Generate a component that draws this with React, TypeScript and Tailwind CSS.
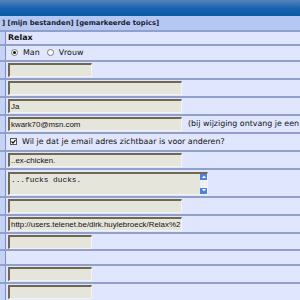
import React from 'react';

const font = { fontFamily: '"Liberation Sans", Arial, sans-serif' };
const verdana = { fontFamily: '"DejaVu Sans", Verdana, sans-serif' };

const Input: React.FC<{ w: number; value?: string }> = ({ w, value }) => (
  <div
    className="h-[14px] bg-[#e6e5dc] border-t-2 border-l-2 border-t-[#6e6850] border-l-[#6e6850] border-b border-r border-b-[#f4f3ec] border-r-[#f4f3ec] text-[7.9px] leading-[11px] pl-[1px] text-[#111] overflow-hidden whitespace-nowrap"
    style={{ width: w }}
  >
    {value}
  </div>
);

const Row: React.FC<{ h: number; children?: React.ReactNode }> = ({ h, children }) => (
  <div className="flex border-b-2 border-[#939fcb]" style={{ height: h + 2 }}>
    <div className="w-[6px] shrink-0 bg-[#c6d3f5] border-r border-[#7d8bc8]" />
    <div className="flex-1 flex items-center pl-[2px] bg-[#dfe6fd] overflow-hidden">{children}</div>
  </div>
);

export default function App() {
  return (
    <div className="w-[300px] h-[300px] overflow-hidden bg-[#dfe6fd]" style={font}>
      {/* header band */}
      <div className="h-[16px] bg-gradient-to-b from-[#5584bb] via-[#1663b0] to-[#0b5aa6]" />
      {/* nav */}
      <div
        className="h-[16px] bg-[#b5c8f4] border-b-2 border-[#939fcb] flex items-center pl-[2px] text-[6.85px] font-bold text-[#1b1b2e] whitespace-nowrap"
        style={verdana}
      >
        ] [mijn bestanden] [gemarkeerde topics]
      </div>
      <Row h={12}>
        <span className="text-[7.9px] font-bold text-[#111]" style={verdana}>Relax</span>
      </Row>
      <Row h={14}>
        <div className="flex items-center text-[7.9px] text-[#111]" style={verdana}>
          <span className="ml-[3px] w-[7px] h-[7px] rounded-full bg-white border border-[#7a7a7a] flex items-center justify-center">
            <span className="w-[3px] h-[3px] rounded-full bg-[#111]" />
          </span>
          <span className="ml-[5px]">Man</span>
          <span className="ml-[7px] w-[7px] h-[7px] rounded-full bg-white border border-[#7a7a7a]" />
          <span className="ml-[5px]">Vrouw</span>
        </div>
      </Row>
      <Row h={16}>
        <Input w={84} />
      </Row>
      <Row h={16}>
        <Input w={174} />
      </Row>
      <Row h={16}>
        <Input w={174} value="Ja" />
      </Row>
      <Row h={16}>
        <Input w={174} value="kwark70@msn.com" />
        <span className="ml-[6px] text-[7.9px] text-[#111] whitespace-nowrap" style={verdana}>(bij wijziging ontvang je een</span>
      </Row>
      <Row h={16}>
        <div className="flex items-center text-[7.9px] text-[#111] whitespace-nowrap" style={verdana}>
          <span className="ml-[2px] w-[7px] h-[7px] bg-white border border-[#555] flex items-center justify-center">
            <svg width="5" height="5" viewBox="0 0 5 5">
              <path d="M0.5 2.5 L2 4 L4.5 0.8" stroke="#111" strokeWidth="1.2" fill="none" />
            </svg>
          </span>
          <span className="ml-[5px]">Wil je dat je email adres zichtbaar is voor anderen?</span>
        </div>
      </Row>
      <Row h={16}>
        <Input w={174} value="..ex-chicken." />
      </Row>
      <Row h={26}>
        <div className="flex h-[23px] w-[200px] bg-[#e6e5dc] border-t-2 border-l-2 border-t-[#6e6850] border-l-[#6e6850] border-b border-r border-b-[#f4f3ec] border-r-[#f4f3ec]">
          <div className="flex-1 text-[7.8px] leading-[10px] pl-[1px] pt-[1px] text-[#111]" style={{ fontFamily: '"Liberation Mono", monospace' }}>
            ...fucks ducks.
          </div>
          <div className="w-[7px] flex flex-col justify-between bg-[#eef0f6]">
            <div className="h-[6px] bg-[#4a82e0] flex items-center justify-center">
              <svg width="4" height="3" viewBox="0 0 4 3"><path d="M0 3 L2 0.5 L4 3 Z" fill="#fff" /></svg>
            </div>
            <div className="h-[6px] bg-[#4a82e0] flex items-center justify-center">
              <svg width="4" height="3" viewBox="0 0 4 3"><path d="M0 0 L2 2.5 L4 0 Z" fill="#fff" /></svg>
            </div>
          </div>
        </div>
      </Row>
      <Row h={16}>
        <Input w={174} />
      </Row>
      <Row h={16}>
        <Input w={174} value="http://users.telenet.be/dirk.huylebroeck/Relax%2" />
      </Row>
      <Row h={15}>
        <Input w={84} />
      </Row>
      <Row h={13} />
      <Row h={16}>
        <Input w={84} />
      </Row>
      <Row h={16}>
        <Input w={84} />
      </Row>
    </div>
  );
}
